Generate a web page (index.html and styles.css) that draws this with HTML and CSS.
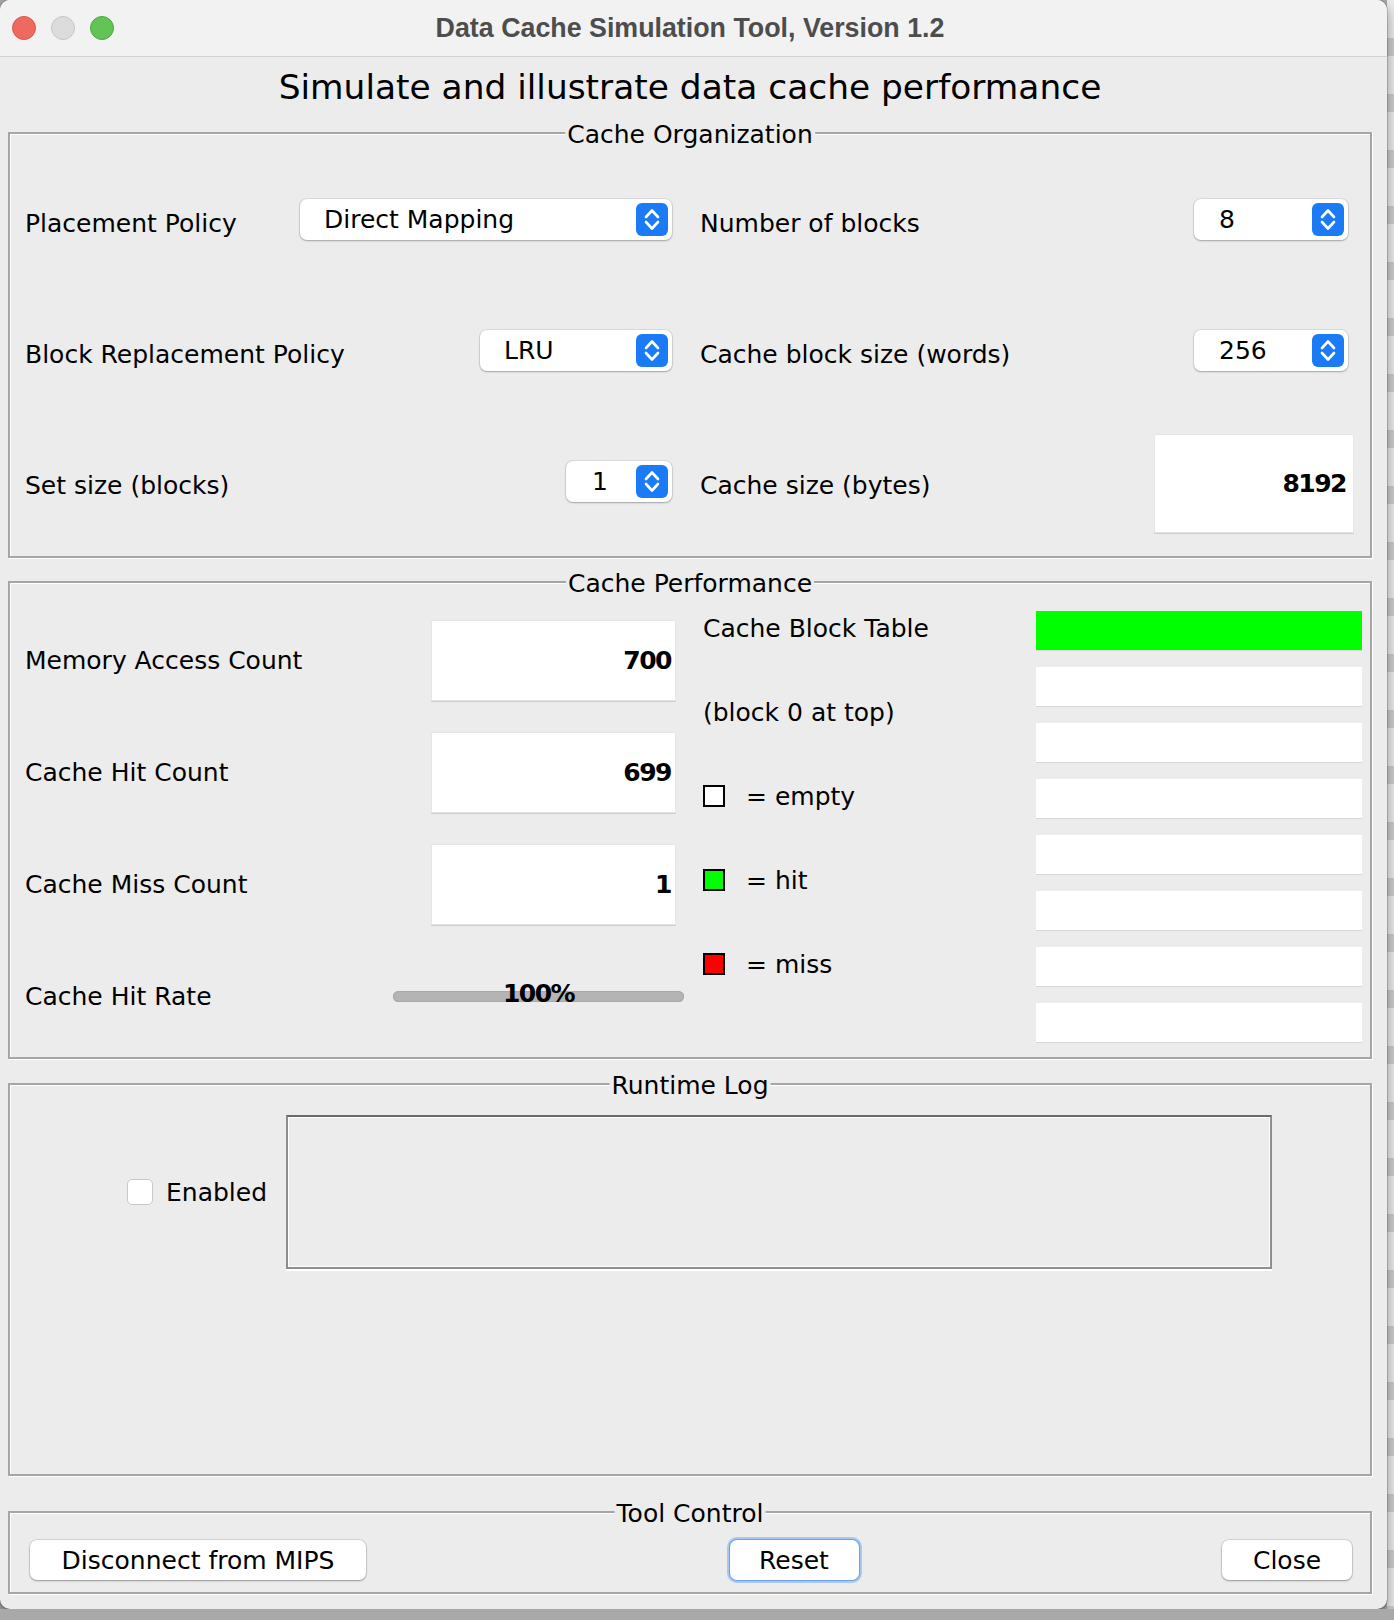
FILE: index.html
```html
<!DOCTYPE html>
<html lang="en">
<head>
    <meta charset="UTF-8">
    <meta name="viewport" content="width=device-width, initial-scale=1.0">
    <title>Data Cache Simulation Tool, Version 1.2</title>
    <link rel="stylesheet" href="styles.css">
</head>
<body>

<div class="desktop">
    <div class="window">
        <div class="titlebar">
            <div class="lights">
                <span class="light close"></span>
                <span class="light minimize"></span>
                <span class="light zoom"></span>
            </div>
            <div class="title">Data Cache Simulation Tool, Version 1.2</div>
        </div>

        <div class="content">
            <h1 class="heading">Simulate and illustrate data cache performance</h1>

            <!-- Cache Organization -->
            <section class="group organization">
                <span class="group-title">Cache Organization</span>
                <div class="org-grid">
                    <div class="cell">
                        <span class="label">Placement Policy</span>
                        <div class="combo combo-placement">
                            <span>Direct Mapping</span>
                            <svg class="stepper" width="32" height="33" viewBox="0 0 32 33"><rect width="32" height="33" rx="6" fill="#1b7bf7"/><path d="M10 14 L16 7.5 L22 14 M10 19 L16 25.5 L22 19" fill="none" stroke="#fff" stroke-width="2.6" stroke-linecap="round" stroke-linejoin="round"/></svg>
                        </div>
                    </div>
                    <div class="cell">
                        <span class="label">Number of blocks</span>
                        <div class="combo combo-right">
                            <span>8</span>
                            <svg class="stepper" width="32" height="33" viewBox="0 0 32 33"><rect width="32" height="33" rx="6" fill="#1b7bf7"/><path d="M10 14 L16 7.5 L22 14 M10 19 L16 25.5 L22 19" fill="none" stroke="#fff" stroke-width="2.6" stroke-linecap="round" stroke-linejoin="round"/></svg>
                        </div>
                    </div>
                    <div class="cell">
                        <span class="label">Block Replacement Policy</span>
                        <div class="combo combo-replace">
                            <span>LRU</span>
                            <svg class="stepper" width="32" height="33" viewBox="0 0 32 33"><rect width="32" height="33" rx="6" fill="#1b7bf7"/><path d="M10 14 L16 7.5 L22 14 M10 19 L16 25.5 L22 19" fill="none" stroke="#fff" stroke-width="2.6" stroke-linecap="round" stroke-linejoin="round"/></svg>
                        </div>
                    </div>
                    <div class="cell">
                        <span class="label">Cache block size (words)</span>
                        <div class="combo combo-right">
                            <span>256</span>
                            <svg class="stepper" width="32" height="33" viewBox="0 0 32 33"><rect width="32" height="33" rx="6" fill="#1b7bf7"/><path d="M10 14 L16 7.5 L22 14 M10 19 L16 25.5 L22 19" fill="none" stroke="#fff" stroke-width="2.6" stroke-linecap="round" stroke-linejoin="round"/></svg>
                        </div>
                    </div>
                    <div class="cell">
                        <span class="label">Set size (blocks)</span>
                        <div class="combo combo-set">
                            <span>1</span>
                            <svg class="stepper" width="32" height="33" viewBox="0 0 32 33"><rect width="32" height="33" rx="6" fill="#1b7bf7"/><path d="M10 14 L16 7.5 L22 14 M10 19 L16 25.5 L22 19" fill="none" stroke="#fff" stroke-width="2.6" stroke-linecap="round" stroke-linejoin="round"/></svg>
                        </div>
                    </div>
                    <div class="cell">
                        <span class="label">Cache size (bytes)</span>
                        <div class="value-field size-field">8192</div>
                    </div>
                </div>
            </section>

            <!-- Cache Performance -->
            <section class="group performance">
                <span class="group-title">Cache Performance</span>
                <div class="perf-left">
                    <div class="cell">
                        <span>Memory Access Count</span>
                        <div class="value-field count-field">700</div>
                    </div>
                    <div class="cell">
                        <span>Cache Hit Count</span>
                        <div class="value-field count-field">699</div>
                    </div>
                    <div class="cell">
                        <span>Cache Miss Count</span>
                        <div class="value-field count-field">1</div>
                    </div>
                    <div class="cell">
                        <span>Cache Hit Rate</span>
                        <div class="progress">
                            <div class="track"></div>
                            <span class="progress-text">100%</span>
                        </div>
                    </div>
                </div>
                <div class="perf-right">
                    <div class="key-col">
                        <span>Cache Block Table</span>
                        <span>(block 0 at top)</span>
                        <div class="key"><span class="swatch empty"></span>= empty</div>
                        <div class="key"><span class="swatch hit"></span>= hit</div>
                        <div class="key"><span class="swatch miss"></span>= miss</div>
                    </div>
                    <div class="block-table">
                        <div class="block hit"></div>
                        <div class="block"></div>
                        <div class="block"></div>
                        <div class="block"></div>
                        <div class="block"></div>
                        <div class="block"></div>
                        <div class="block"></div>
                        <div class="block"></div>
                    </div>
                </div>
            </section>

            <!-- Runtime Log -->
            <section class="group runtime">
                <span class="group-title">Runtime Log</span>
                <div class="log-row">
                    <span class="checkbox"></span>
                    <span>Enabled</span>
                    <div class="log-area"></div>
                </div>
            </section>

            <!-- Tool Control -->
            <section class="group controls">
                <span class="group-title">Tool Control</span>
                <button type="button" class="btn btn-disconnect">Disconnect from MIPS</button>
                <button type="button" class="btn btn-reset">Reset</button>
                <button type="button" class="btn btn-close">Close</button>
            </section>
        </div>
    </div>
    <div class="behind"></div>
</div>

</body>
</html>
```

FILE: styles.css
```css
* {
    box-sizing: border-box;
}
body {
    margin: 0;
    background-color: #a9a9a9;
    font-family: "Lucida Grande", "DejaVu Sans", sans-serif;
    font-size: 25px;
    color: #000;
    overflow: hidden;
}
.desktop {
    display: flex;
}
.behind {
    flex: 1;
    height: 1609px;
    background-color: #e2e2e2;
    background-image: repeating-linear-gradient(to bottom, #ececec 0 38px, #cdcdcd 38px 56px);
}
.window {
    width: 1387px;
    height: 1609px;
    background-color: #ececec;
    border-radius: 10px;
    overflow: hidden;
    box-shadow: 0 0 0 1px rgba(0, 0, 0, 0.15), 0 6px 14px rgba(0, 0, 0, 0.4);
    position: relative;
    z-index: 1;
}

/* title bar */
.titlebar {
    height: 57px;
    display: grid;
    grid-template-columns: 1fr auto 1fr;
    align-items: center;
    padding: 0 19px 0 12px;
    background-color: #f2f2f2;
    border-bottom: 1px solid #d2d2d2;
}
.lights {
    display: flex;
    gap: 15px;
}
.light {
    width: 24px;
    height: 24px;
    border-radius: 50%;
}
.close {
    background-color: #ee6a5f;
    border: 1px solid #d8564c;
}
.minimize {
    background-color: #dcdcdc;
    border: 1px solid #c6c6c6;
}
.zoom {
    background-color: #61c455;
    border: 1px solid #4fa83f;
}
.title {
    font-family: "Liberation Sans", Arial, sans-serif;
    font-weight: bold;
    font-size: 26.8px;
    color: #4d4d4d;
}

.content {
    padding: 0 15px 0 8px;
}
.heading {
    margin: 0 0 15px;
    height: 60px;
    line-height: 60px;
    font-size: 34.4px;
    font-weight: normal;
    text-align: center;
}

/* etched group boxes */
.group {
    position: relative;
    border: 2px solid #a6a6a6;
    box-shadow: inset 1px 1px 0 #fff, 1px 1px 0 #fff;
}
.group-title {
    position: absolute;
    top: -14px;
    left: 50%;
    transform: translateX(-50%);
    padding: 0 2px;
    line-height: 30px;
    background-color: #ececec;
    white-space: nowrap;
}
.cell {
    display: flex;
    align-items: center;
    justify-content: space-between;
}
.label {
    padding-top: 4px;
}

.organization {
    height: 426px;
    margin-bottom: 23px;
}
.org-grid {
    display: grid;
    grid-template-columns: 652px 652px;
    grid-template-rows: repeat(3, 131px);
    column-gap: 23px;
    padding: 22px 0 0 15px;
}
.combo {
    display: flex;
    align-items: center;
    justify-content: space-between;
    height: 41px;
    margin-bottom: 4px;
    padding: 0 4px 0 24px;
    background-color: #fff;
    border-radius: 7px;
    box-shadow: 0 0 0 1px rgba(0, 0, 0, 0.07), 0 1px 2px rgba(0, 0, 0, 0.25);
}
.stepper {
    display: block;
}
.combo-placement {
    width: 372px;
    margin-right: 5px;
}
.combo-replace {
    width: 192px;
    margin-right: 5px;
}
.combo-set {
    width: 106px;
    margin-right: 5px;
    padding-left: 26px;
}
.combo-right {
    width: 154px;
    margin-right: 4px;
    padding-left: 25px;
}
.value-field {
    display: flex;
    align-items: center;
    justify-content: flex-end;
    background-color: #fff;
    font-weight: bold;
    letter-spacing: -1.5px;
    box-shadow: 0 1px 0 #cfcfcf, inset 0 0 0 1px #e6e6e6;
}
.size-field {
    width: 200px;
    height: 99px;
    margin-right: -2px;
    padding-right: 8px;
}

.performance {
    height: 478px;
    margin-bottom: 24px;
    display: flex;
}
.perf-left {
    width: 652px;
    margin-left: 15px;
    padding-top: 21px;
    display: grid;
    grid-template-rows: repeat(4, 112px);
}
.count-field {
    width: 245px;
    height: 81px;
    margin-right: 1px;
    padding-right: 5px;
}
.progress {
    display: grid;
    width: 291px;
    margin-right: -7px;
    align-items: center;
    justify-items: center;
}
.progress > * {
    grid-area: 1 / 1;
}
.track {
    width: 100%;
    height: 11px;
    border-radius: 6px;
    background-color: #b4b4b4;
    box-shadow: inset 0 0 0 1px #a8a8a8;
}
.progress-text {
    font-weight: bold;
    letter-spacing: -1.5px;
    margin-top: -6px;
}
.perf-right {
    flex: 1;
    display: flex;
    margin-left: 26px;
}
.key-col {
    flex: 1;
    padding-top: 3px;
    display: grid;
    grid-template-rows: repeat(5, 84px);
    align-items: center;
}
.key {
    display: flex;
    align-items: center;
}
.swatch {
    width: 22px;
    height: 22px;
    margin-right: 21px;
    border: 2px solid #000;
}
.swatch.empty {
    background-color: #fff;
}
.swatch.hit {
    background-color: #00ff00;
}
.swatch.miss {
    background-color: #ff0000;
}
.block-table {
    width: 326px;
    margin-right: 8px;
    padding-top: 28px;
    display: flex;
    flex-direction: column;
    gap: 17px;
}
.block {
    height: 39px;
    background-color: #fff;
    box-shadow: 0 1px 0 #d6d6d6;
}
.block.hit {
    background-color: #00ff00;
}

.runtime {
    height: 393px;
    margin-bottom: 35px;
    padding: 30px 0 0 117px;
}
.log-row {
    display: flex;
    align-items: center;
}
.checkbox {
    width: 26px;
    height: 26px;
    margin-right: 13px;
    border-radius: 5px;
    background-color: #fff;
    border: 1px solid #c8c8c8;
}
.log-area {
    width: 986px;
    height: 154px;
    margin-left: 19px;
    border: 2px solid #8e8e8e;
    border-top-color: #6a6a6a;
    box-shadow: inset 0 0 0 1px #fff, 0 2px 0 #fff;
}

.controls {
    height: 83px;
    display: flex;
    justify-content: space-between;
    align-items: flex-start;
    padding: 27px 18px 0 20px;
}
.btn {
    height: 40px;
    padding: 0;
    border: none;
    border-radius: 7px;
    background-color: #fff;
    font: inherit;
    color: #000;
    box-shadow: 0 0 0 1px rgba(0, 0, 0, 0.09), 0 1px 2px rgba(0, 0, 0, 0.3);
}
.btn-disconnect {
    width: 336px;
}
.btn-reset {
    width: 129px;
    box-shadow: 0 0 0 1px #6d9fe4, 0 0 0 3px #a8c8f3;
}
.btn-close {
    width: 130px;
}
```
